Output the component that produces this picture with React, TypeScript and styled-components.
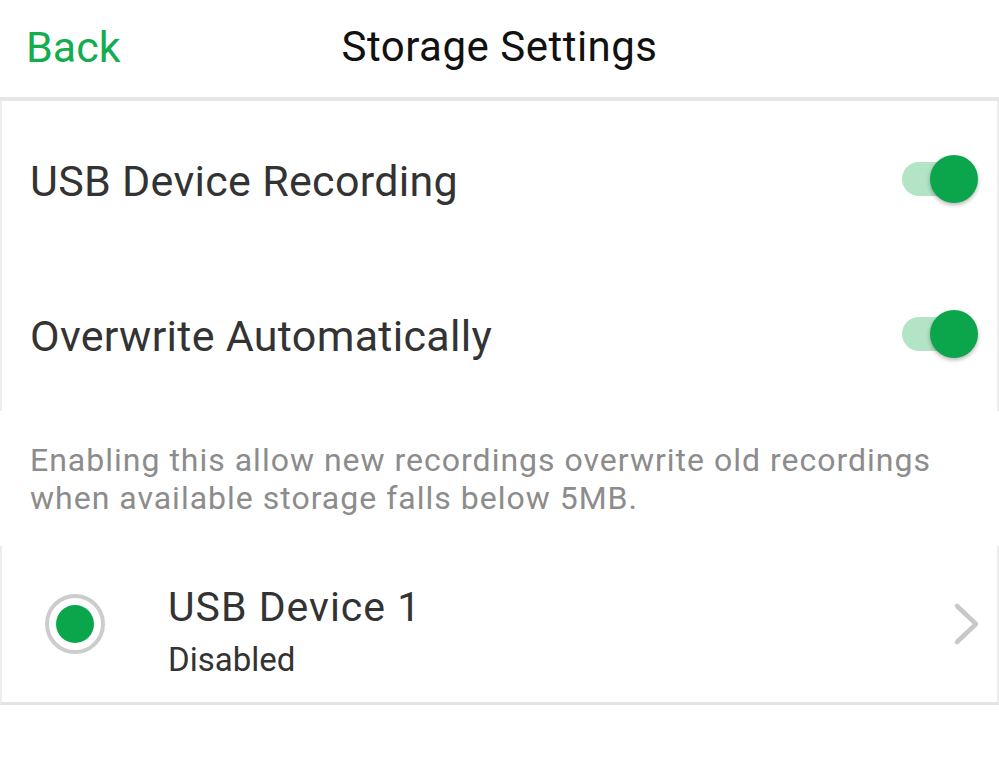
import styled, { createGlobalStyle } from "styled-components";

const GlobalStyle = createGlobalStyle`
  html, body {
    margin: 0;
    padding: 0;
    background: #ffffff;
  }
  body {
    font-family: Roboto, "Noto Sans", "Liberation Sans", sans-serif;
    color: #333333;
  }
`;

const Screen = styled.div`
  width: 999px;
  height: 783px;
  overflow: hidden;
  background: #ffffff;
  display: flex;
  flex-direction: column;
`;

const Header = styled.header`
  position: relative;
  height: 97px;
  display: flex;
  align-items: center;
  justify-content: center;
  border-bottom: 4px solid #e6e6e6;
  flex-shrink: 0;
`;

const BackButton = styled.button`
  position: absolute;
  left: 26px;
  top: 50%;
  transform: translateY(-50%);
  margin-top: -2px;
  background: none;
  border: 0;
  padding: 0;
  font-family: inherit;
  font-size: 43px;
  color: #13ad4e;
  cursor: pointer;
`;

const Title = styled.h1`
  margin: 0;
  margin-top: -4px;
  font-size: 42px;
  letter-spacing: 0.5px;
  font-weight: 400;
  color: #111111;
`;

const Card = styled.section<{ bottomLine?: boolean }>`
  display: flex;
  flex-direction: column;
  border-left: 2px solid #ededed;
  border-right: 2px solid #ededed;
  border-bottom: ${(p) => (p.bottomLine ? "3px solid #e4e4e4" : "0")};
`;

const ToggleRow = styled.div`
  height: 155px;
  display: flex;
  align-items: center;
  justify-content: space-between;
  padding: 0 19px 0 28px;
`;

const RowLabel = styled.span`
  font-size: 43px;
  letter-spacing: 0.3px;
  color: #333333;
  margin-top: 4px;
`;

const Switch = styled.div`
  position: relative;
  width: 76px;
  height: 48px;
  display: flex;
  align-items: center;
`;

const Track = styled.div`
  width: 68px;
  height: 34px;
  border-radius: 17px;
  background: #b3e4c6;
`;

const Thumb = styled.div`
  position: absolute;
  right: 0;
  top: 0;
  width: 48px;
  height: 48px;
  border-radius: 50%;
  background: #0ba64b;
  box-shadow: 0 2px 4px rgba(0, 0, 0, 0.3);
`;

const Note = styled.p`
  margin: 0;
  height: 135px;
  box-sizing: border-box;
  padding: 30px 20px 0 30px;
  font-size: 32px;
  letter-spacing: 1px;
  line-height: 38px;
  color: #8c8c8c;
`;

const DeviceRow = styled.div`
  height: 156px;
  display: flex;
  align-items: center;
  padding: 0 16px 0 43px;
`;

const Radio = styled.div`
  width: 60px;
  height: 60px;
  box-sizing: border-box;
  border: 4px solid #cccccc;
  border-radius: 50%;
  display: flex;
  align-items: center;
  justify-content: center;
  flex-shrink: 0;
`;

const RadioDot = styled.div`
  width: 38px;
  height: 38px;
  border-radius: 50%;
  background: #0ba64b;
`;

const DeviceText = styled.div`
  flex: 1;
  margin-left: 63px;
  display: flex;
  flex-direction: column;
  margin-top: 22px;
`;

const DeviceName = styled.span`
  font-size: 41px;
  letter-spacing: 1px;
  line-height: 50px;
  color: #333333;
`;

const DeviceStatus = styled.span`
  font-size: 33px;
  line-height: 56px;
  color: #333333;
`;

const Chevron = () => (
  <svg width="28" height="44" viewBox="0 0 28 44" fill="none">
    <polyline
      points="4,4 23,22 4,40"
      stroke="#c8c8c8"
      strokeWidth="4.5"
      strokeLinecap="round"
      strokeLinejoin="round"
    />
  </svg>
);

const Toggle = () => (
  <Switch>
    <Track />
    <Thumb />
  </Switch>
);

export default function App() {
  return (
    <>
      <GlobalStyle />
      <Screen>
        <Header>
          <BackButton>Back</BackButton>
          <Title>Storage Settings</Title>
        </Header>

        <Card>
          <ToggleRow>
            <RowLabel>USB Device Recording</RowLabel>
            <Toggle />
          </ToggleRow>
          <ToggleRow>
            <RowLabel>Overwrite Automatically</RowLabel>
            <Toggle />
          </ToggleRow>
        </Card>

        <Note>
          Enabling this allow new recordings overwrite old recordings when
          available storage falls below 5MB.
        </Note>

        <Card bottomLine>
          <DeviceRow>
            <Radio>
              <RadioDot />
            </Radio>
            <DeviceText>
              <DeviceName>USB Device 1</DeviceName>
              <DeviceStatus>Disabled</DeviceStatus>
            </DeviceText>
            <Chevron />
          </DeviceRow>
        </Card>
      </Screen>
    </>
  );
}
